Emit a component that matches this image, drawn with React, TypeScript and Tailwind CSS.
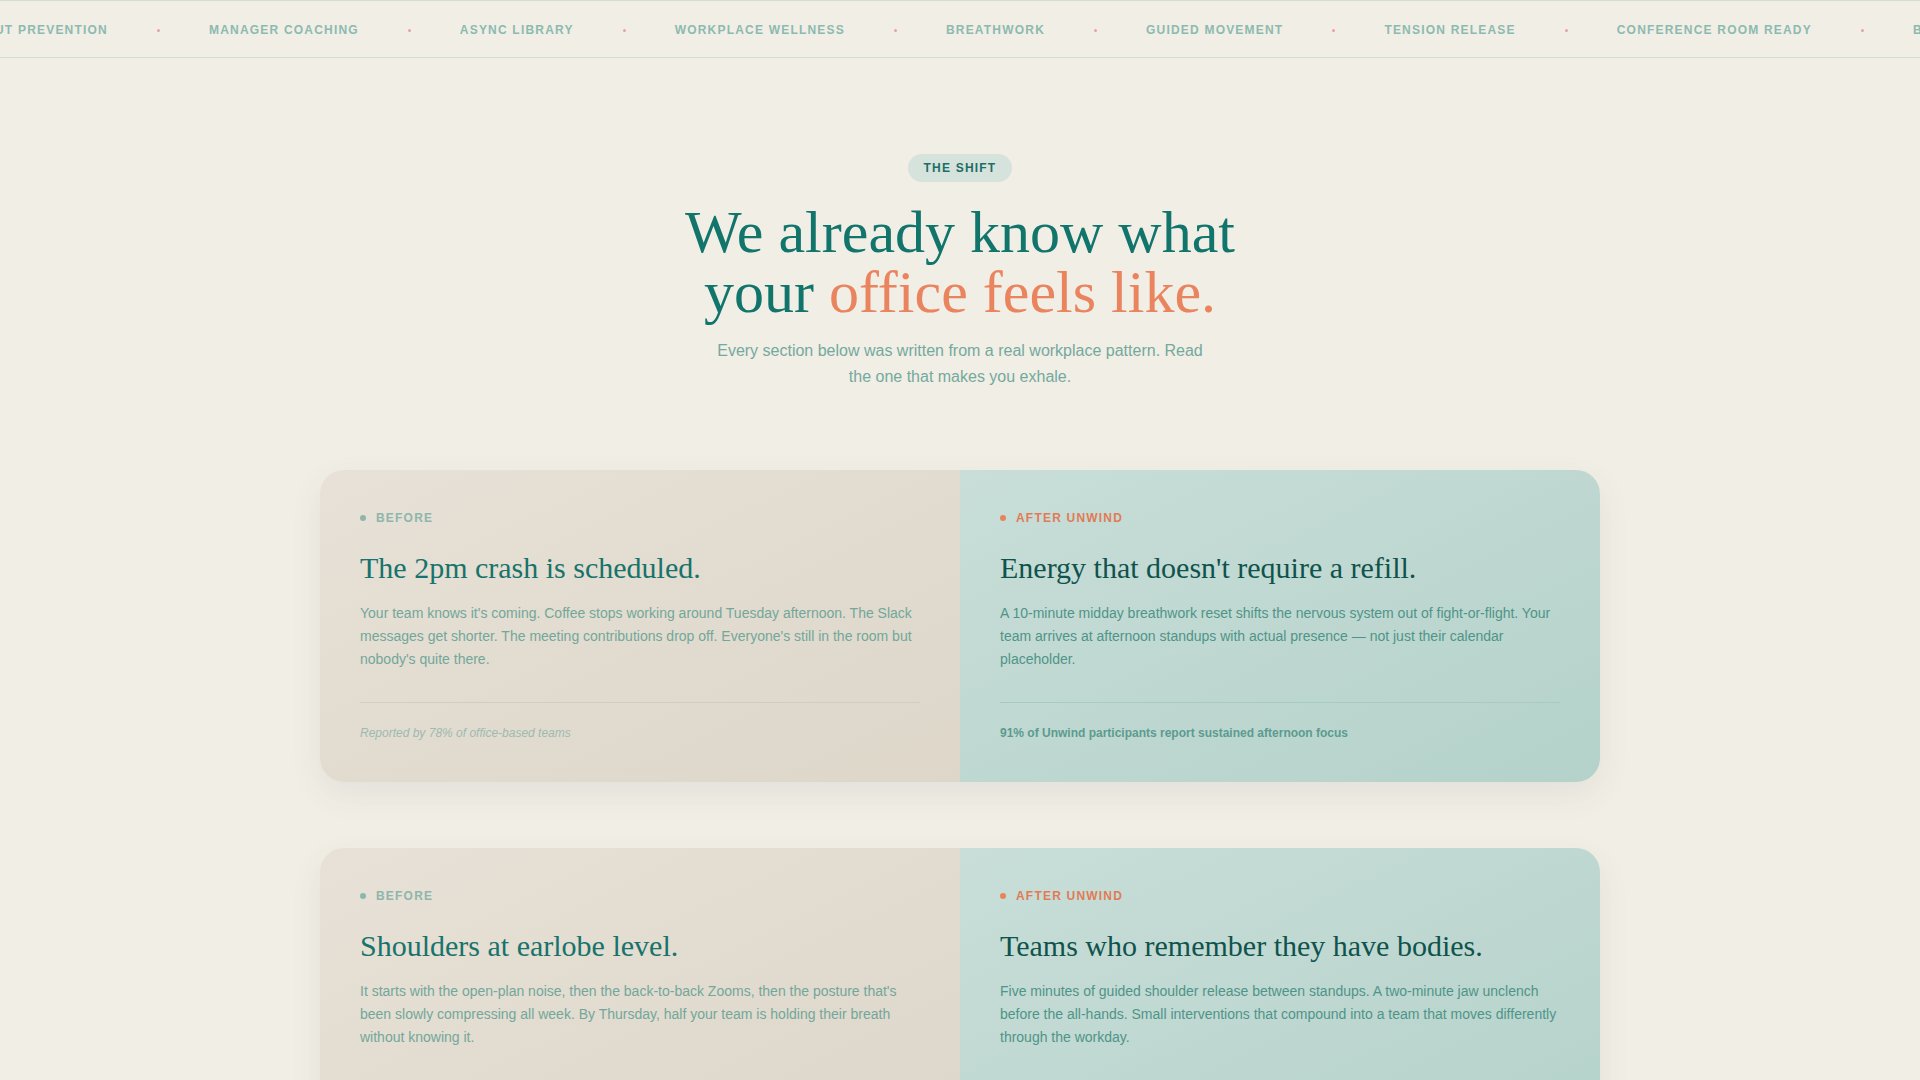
const tickerItems = [
  'BURNOUT PREVENTION',
  'MANAGER COACHING',
  'ASYNC LIBRARY',
  'WORKPLACE WELLNESS',
  'BREATHWORK',
  'GUIDED MOVEMENT',
  'TENSION RELEASE',
  'CONFERENCE ROOM READY',
];

interface Shift {
  beforeTitle: string;
  beforeBody: string;
  beforeNote: string;
  afterTitle: string;
  afterBody: string;
  afterNote: string;
}

const shifts: Shift[] = [
  {
    beforeTitle: 'The 2pm crash is scheduled.',
    beforeBody:
      "Your team knows it's coming. Coffee stops working around Tuesday afternoon. The Slack messages get shorter. The meeting contributions drop off. Everyone's still in the room but nobody's quite there.",
    beforeNote: 'Reported by 78% of office-based teams',
    afterTitle: "Energy that doesn't require a refill.",
    afterBody:
      'A 10-minute midday breathwork reset shifts the nervous system out of fight-or-flight. Your team arrives at afternoon standups with actual presence — not just their calendar placeholder.',
    afterNote: '91% of Unwind participants report sustained afternoon focus',
  },
  {
    beforeTitle: 'Shoulders at earlobe level.',
    beforeBody:
      "It starts with the open-plan noise, then the back-to-back Zooms, then the posture that's been slowly compressing all week. By Thursday, half your team is holding their breath without knowing it.",
    beforeNote: 'Most common in hybrid and open-plan offices',
    afterTitle: 'Teams who remember they have bodies.',
    afterBody:
      'Five minutes of guided shoulder release between standups. A two-minute jaw unclench before the all-hands. Small interventions that compound into a team that moves differently through the workday.',
    afterNote: '84% fewer tension complaints after six weeks',
  },
];

function Ticker() {
  const row = [...tickerItems, ...tickerItems];
  return (
    <div className="h-[58px] overflow-hidden border-y border-[#d3dcd3] flex items-center">
      <div className="flex items-center gap-12 whitespace-nowrap -translate-x-[55px] translate-y-px">
        {row.map((item, i) => (
          <div key={i} className="flex items-center gap-12">
            <span className="text-xs leading-4 font-bold tracking-[0.1em] text-[#8cbab0]">{item}</span>
            <span className="w-[5px] flex justify-center">
              <span className="w-[3px] h-[3px] rounded-full bg-[#e9a3a0]" />
            </span>
          </div>
        ))}
      </div>
    </div>
  );
}

function ShiftCard({ shift }: { shift: Shift }) {
  return (
    <div className="grid grid-cols-2 rounded-3xl overflow-hidden shadow-[0_12px_32px_rgba(60,80,70,0.08)]">
      {/* Before */}
      <div className="px-10 pt-10 pb-[41px] flex flex-col bg-gradient-to-br from-[#e7e1d7] to-[#ddd6c9]">
        <div className="flex items-center gap-2.5 text-xs leading-4 font-bold tracking-[0.1em] text-[#8fb6ab]">
          <span className="w-1.5 h-1.5 rounded-full bg-[#8fb6ab]" />
          BEFORE
        </div>
        <h3 className="mt-6 font-['Liberation_Serif',Georgia,serif] text-3xl leading-9 text-[#17736b]">
          {shift.beforeTitle}
        </h3>
        <p className="mt-4 text-sm leading-relaxed text-[#72a79a]">{shift.beforeBody}</p>
        <div className="mt-8 pt-[22px] border-t border-[#d3ccc0]">
          <p className="text-xs leading-4 italic text-[#9dbab0]">{shift.beforeNote}</p>
        </div>
      </div>

      {/* After */}
      <div className="px-10 pt-10 pb-[41px] flex flex-col bg-gradient-to-br from-[#c9ded8] to-[#b4d2ca]">
        <div className="flex items-center gap-2.5 text-xs leading-4 font-bold tracking-[0.1em] text-[#e07b56]">
          <span className="w-1.5 h-1.5 rounded-full bg-[#e8835b]" />
          AFTER UNWIND
        </div>
        <h3 className="mt-6 font-['Liberation_Serif',Georgia,serif] text-3xl leading-9 text-[#10534d]">
          {shift.afterTitle}
        </h3>
        <p className="mt-4 text-sm leading-relaxed text-[#4f9488]">{shift.afterBody}</p>
        <div className="mt-8 pt-[22px] border-t border-[#a9cac2]">
          <p className="text-xs leading-4 font-bold text-[#5c9b8f]">{shift.afterNote}</p>
        </div>
      </div>
    </div>
  );
}

export default function App() {
  return (
    <div className="min-h-screen bg-[#f1eee6] font-['Liberation_Sans',Arial,sans-serif] pb-24">
      <Ticker />

      {/* Intro */}
      <section className="pt-24 flex flex-col items-center text-center">
        <span className="px-4 py-1.5 rounded-full bg-[#d6e2dc] text-xs leading-4 font-bold tracking-[0.1em] text-[#1c6e66]">
          THE SHIFT
        </span>
        <h2 className="mt-5 font-['Liberation_Serif',Georgia,serif] text-[60px] leading-none text-[#12756c]">
          We already know what
          <br />
          your <span className="text-[#e9845e]">office feels like.</span>
        </h2>
        <p className="mt-4 max-w-[500px] text-base leading-[1.6] text-[#74a99d]">
          Every section below was written from a real workplace pattern. Read the one that makes you exhale.
        </p>
      </section>

      {/* Before / after cards */}
      <section className="mt-[81px] max-w-[1280px] mx-auto flex flex-col gap-[66px]">
        {shifts.map((shift, i) => (
          <ShiftCard key={i} shift={shift} />
        ))}
      </section>
    </div>
  );
}
